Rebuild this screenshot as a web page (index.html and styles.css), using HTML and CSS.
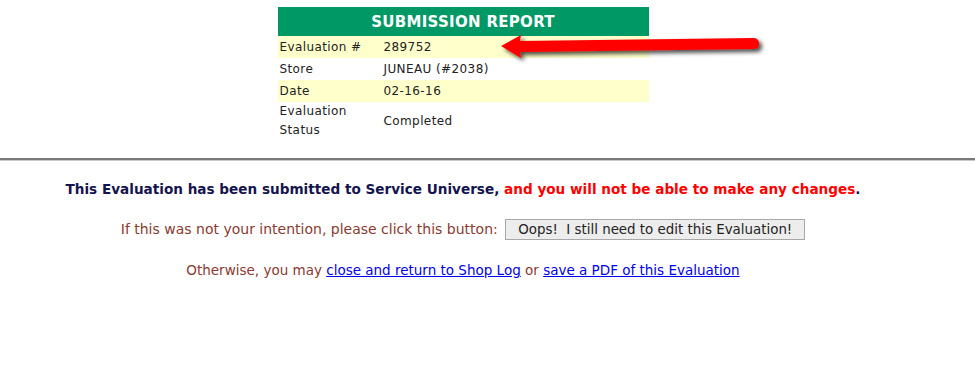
FILE: index.html
```html
<!DOCTYPE html>
<html lang="en">
<head>
    <meta charset="UTF-8">
    <title>Submission Report</title>
    <link rel="stylesheet" href="styles.css">
</head>
<body>
    <div class="top">
        <table class="report">
            <tr><th colspan="2">SUBMISSION REPORT</th></tr>
            <tr class="alt"><td class="label">Evaluation #</td><td>289752</td></tr>
            <tr><td class="label">Store</td><td>JUNEAU (#2038)</td></tr>
            <tr class="alt"><td class="label">Date</td><td>02-16-16</td></tr>
            <tr><td class="label">Evaluation<br>Status</td><td>Completed</td></tr>
        </table>
        <svg class="arrow" width="280" height="40" viewBox="0 0 280 40">
            <defs>
                <filter id="shadow" x="-10%" y="-50%" width="120%" height="200%">
                    <feGaussianBlur in="SourceAlpha" stdDeviation="2"/>
                    <feOffset dx="3" dy="3" result="blur"/>
                    <feComponentTransfer><feFuncA type="linear" slope="0.7"/></feComponentTransfer>
                    <feMerge><feMergeNode/><feMergeNode in="SourceGraphic"/></feMerge>
                </filter>
            </defs>
            <path d="M4 18 L24 7 L23 13 L256 10 Q262 10 262 15.5 Q262 21 256 21 L23 24 L24 30 Z" fill="#ff0000" filter="url(#shadow)"/>
        </svg>
    </div>
    <hr class="divider">
    <div class="message">
        <p class="notice">This Evaluation has been submitted to Service Universe, <span class="warn">and you will not be able to make any changes</span>.</p>
        <p class="line ask">If this was not your intention, please click this button: <button class="oops">Oops!&nbsp; I still need to edit this Evaluation!</button></p>
        <p class="line">Otherwise, you may <a href="#">close and return to Shop Log</a> or <a href="#">save a PDF of this Evaluation</a></p>
    </div>
</body>
</html>
```

FILE: styles.css
```css
body {
    margin: 0;
    background: #fff;
    font-family: "DejaVu Sans", Verdana, sans-serif;
}
.top {
    position: relative;
    width: 926px;
    padding-top: 7px;
}
.report {
    border-collapse: collapse;
    width: 371px;
    margin: 0 auto;
    font-size: 12px;
    letter-spacing: 0.4px;
    color: #222;
}
.report th {
    background: #009966;
    color: #fff;
    font-size: 15px;
    letter-spacing: 0.3px;
    font-weight: bold;
    height: 29px;
    padding: 0;
    text-align: center;
}
.report td {
    height: 22px;
    padding: 0 2px;
    line-height: 19px;
}
.report td.label {
    width: 100px;
}
.report tr.alt td {
    background: #ffffcc;
}
.arrow {
    position: absolute;
    left: 497px;
    top: 28px;
}
.divider {
    margin: 18px 0 0;
    border: none;
    border-top: 2px solid #7a7a7a;
    border-bottom: 1px solid #c8c8c8;
    height: 0;
}
.message {
    width: 926px;
    text-align: center;
}
.notice {
    margin: 20px 0 0;
    font-size: 13.6px;
    font-weight: bold;
    color: #14144e;
}
.warn {
    color: #ff0000;
}
.line {
    margin: 22px 0 0;
    font-size: 13.5px;
    color: #8b3a2f;
}
.line.ask {
    font-size: 14px;
}
.line a {
    color: #0000ee;
}
.oops {
    font-family: "DejaVu Sans", Verdana, sans-serif;
    font-size: 13.4px;
    color: #222;
    background: #ededed;
    border: 1px solid #a8a8a8;
    padding: 2px 12px;
    margin-left: 3px;
}
```
